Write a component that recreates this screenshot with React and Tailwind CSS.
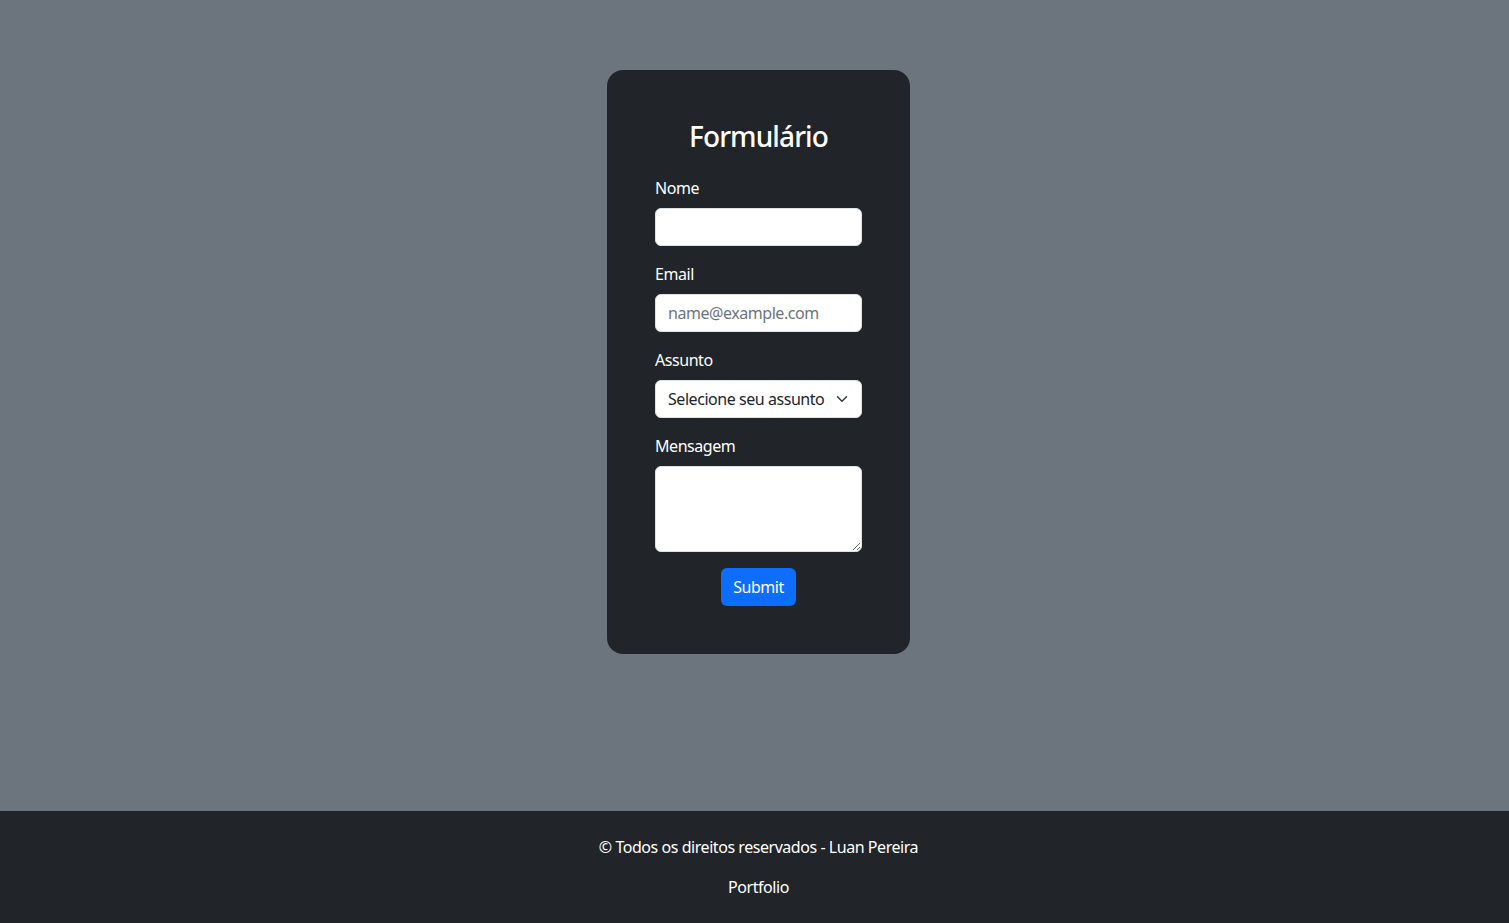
export default function App() {
  return (
    <div className="min-h-screen flex flex-col bg-[#6c757d] text-white tracking-[-0.45px]" style={{ fontFamily: '"Noto Sans", sans-serif' }}>
      <main className="flex-1 pt-[70px] pl-2">
        <div className="w-[303px] mx-auto bg-[#212529] rounded-2xl p-12">
          <h3 className="text-[28px] leading-[1.2] font-medium text-center pt-[2px] mb-[22px] tracking-[-0.9px]">Formulário</h3>
          <form onSubmit={(e) => e.preventDefault()}>
            <div className="mb-4">
              <label className="block text-base leading-6 mb-2">Nome</label>
              <input
                type="text"
                className="block w-full h-[38px] px-3 text-base text-[#212529] bg-white border border-[#dee2e6] rounded-md outline-none"
              />
            </div>
            <div className="mb-4">
              <label className="block text-base leading-6 mb-2">Email</label>
              <input
                type="email"
                placeholder="name@example.com"
                className="block w-full h-[38px] px-3 text-base text-[#212529] bg-white border border-[#dee2e6] rounded-md outline-none placeholder:text-[#6c757d] tracking-[-0.45px]"
              />
            </div>
            <div className="mb-4">
              <label className="block text-base leading-6 mb-2">Assunto</label>
              <div className="relative">
                <select className="block w-full h-[38px] pl-3 pr-9 text-base text-[#212529] bg-white border border-[#dee2e6] rounded-md outline-none appearance-none tracking-[-0.45px]">
                  <option>Selecione seu assunto</option>
                  <option>Dúvida</option>
                  <option>Sugestão</option>
                  <option>Reclamação</option>
                </select>
                <svg className="absolute right-3 top-[13px] pointer-events-none" width="16" height="12" viewBox="0 0 16 16" fill="none">
                  <path d="m2 5 6 6 6-6" stroke="#343a40" strokeWidth="2" strokeLinecap="round" strokeLinejoin="round" />
                </svg>
              </div>
            </div>
            <div className="mb-4">
              <label className="block text-base leading-6 mb-2">Mensagem</label>
              <textarea
                rows={3}
                className="block w-full h-[86px] px-3 py-1.5 text-base text-[#212529] bg-white border border-[#dee2e6] rounded-md outline-none"
              />
            </div>
            <div className="flex justify-center">
              <button type="submit" className="h-[38px] px-3 text-base bg-[#0d6efd] text-white rounded-md tracking-[-0.45px]">
                Submit
              </button>
            </div>
          </form>
        </div>
      </main>
      <footer className="bg-[#212529] py-6 pl-2 text-center text-base leading-6">
        <p className="mb-4">© Todos os direitos reservados - Luan Pereira</p>
        <p>Portfolio</p>
      </footer>
    </div>
  )
}
